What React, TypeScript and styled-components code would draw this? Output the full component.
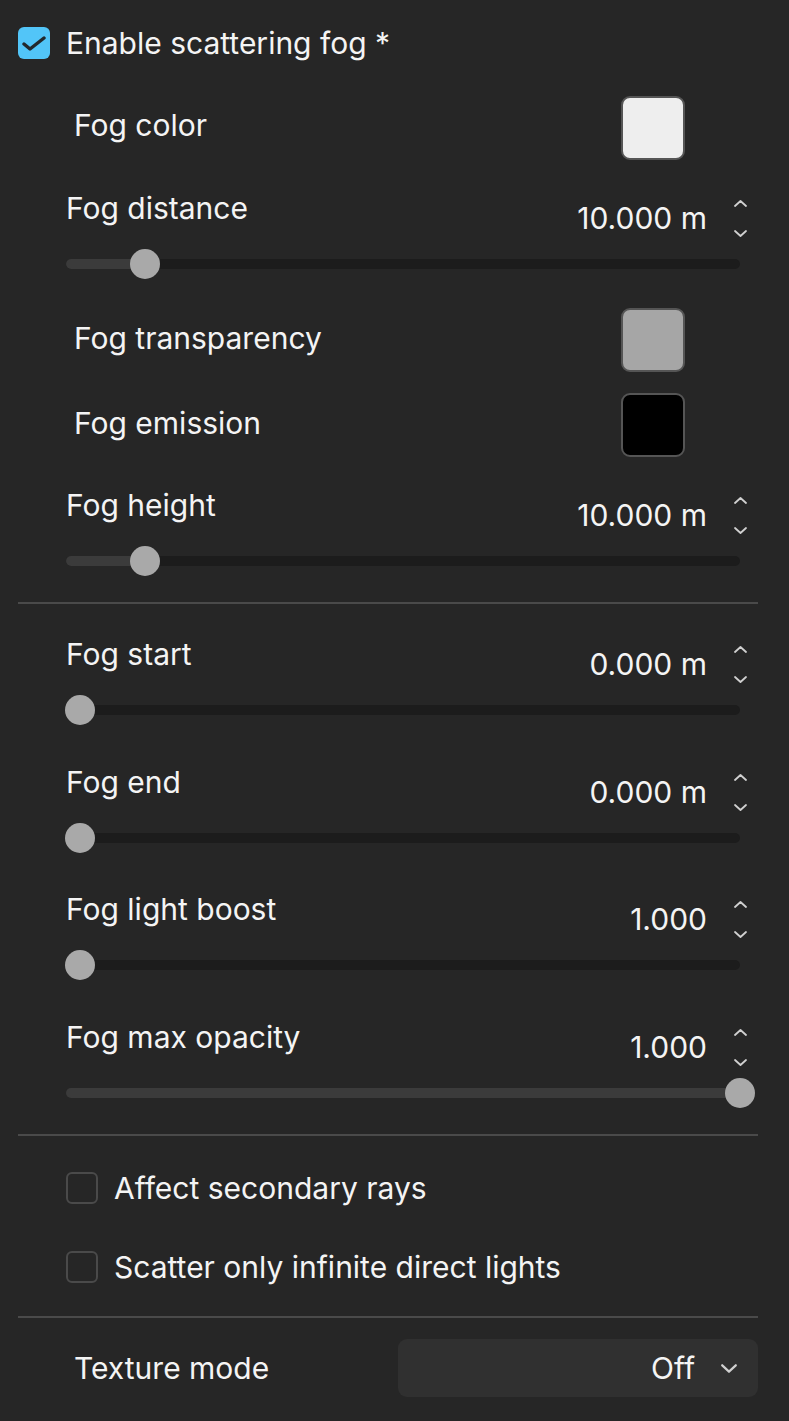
import React from "react";
import styled, { createGlobalStyle } from "styled-components";

const Global = createGlobalStyle`
  html, body { margin: 0; padding: 0; background: #262626; }
  body { font-family: Inter, "Noto Sans", "Liberation Sans", sans-serif; color: #f2f2f2; }
  * { box-sizing: border-box; }
`;

const Panel = styled.div`
  width: 789px;
  min-height: 1421px;
  background: #262626;
  padding: 27px 31px 0 18px;
  display: flex;
  flex-direction: column;
`;

const Text = styled.span<{ $lift?: number }>`
  font-size: 30px;
  line-height: 34px;
  color: #f4f4f4;
  white-space: nowrap;
  margin-bottom: ${(p) => (p.$lift ?? 0) * 2}px;
`;

const CheckRow = styled.label<{ $mt: number; $indent: number }>`
  display: flex;
  align-items: center;
  gap: 16px;
  height: 32px;
  margin-top: ${(p) => p.$mt}px;
  padding-left: ${(p) => p.$indent}px;
`;

const Box = styled.span<{ $checked?: boolean }>`
  width: 32px;
  height: 32px;
  border-radius: 6px;
  flex: none;
  display: flex;
  align-items: center;
  justify-content: center;
  background: ${(p) => (p.$checked ? "#52c5f8" : "transparent")};
  border: ${(p) => (p.$checked ? "none" : "2px solid #4a4a4a")};
`;

const ColorRow = styled.div<{ $mt: number }>`
  display: flex;
  align-items: center;
  justify-content: space-between;
  height: 63px;
  margin-top: ${(p) => p.$mt}px;
  padding-left: 56px;
  padding-right: 73px;
`;

const Swatch = styled.div<{ $color: string }>`
  width: 64px;
  height: 64px;
  border-radius: 9px;
  border: 2px solid #555555;
  background: ${(p) => p.$color};
`;

const SliderBlock = styled.div<{ $mt: number }>`
  display: flex;
  flex-direction: column;
  margin-top: ${(p) => p.$mt}px;
  padding-left: 48px;
`;

const TopLine = styled.div`
  display: flex;
  align-items: flex-start;
  justify-content: space-between;
  height: 58px;
`;

const ValueGroup = styled.div`
  display: flex;
  align-items: center;
  gap: 26px;
  margin-top: 10px;
  height: 34px;
  padding-right: 11px;
`;

const Spinner = styled.div`
  display: flex;
  flex-direction: column;
  align-items: center;
  justify-content: space-between;
  height: 37px;
  width: 14px;
`;

const Track = styled.div`
  position: relative;
  height: 30px;
  width: 674px;
  display: flex;
  align-items: center;
`;

const Rail = styled.div`
  width: 100%;
  height: 10px;
  border-radius: 5px;
  background: #1c1c1c;
  overflow: hidden;
`;

const Fill = styled.div`
  height: 100%;
  background: #3b3b3b;
`;

const Thumb = styled.div`
  position: absolute;
  top: 0;
  width: 30px;
  height: 30px;
  border-radius: 50%;
  background: #a9a9a9;
  transform: translateX(-15px);
`;

const Divider = styled.div<{ $mt: number }>`
  height: 2px;
  background: #4a4a4a;
  margin-top: ${(p) => p.$mt}px;
`;

const SelectRow = styled.div<{ $mt: number }>`
  display: flex;
  align-items: center;
  justify-content: space-between;
  margin-top: ${(p) => p.$mt}px;
  padding-left: 56px;
`;

const Select = styled.div`
  width: 360px;
  height: 58px;
  border-radius: 9px;
  background: #303030;
  display: flex;
  align-items: center;
  justify-content: flex-end;
  gap: 26px;
  padding-right: 21px;
`;

const Chevron = ({ up, w = 13, h = 7 }: { up?: boolean; w?: number; h?: number }) => (
  <svg width={w} height={h} viewBox="0 0 13 7" fill="none" preserveAspectRatio="none">
    <path
      d={up ? "M1 6 L6.5 1 L12 6" : "M1 1 L6.5 6 L12 1"}
      stroke="#d0d0d0"
      strokeWidth="1.8"
      strokeLinecap="round"
      strokeLinejoin="round"
    />
  </svg>
);

const Slider = ({
  mt,
  label,
  value,
  frac,
}: {
  mt: number;
  label: string;
  value: string;
  frac: number;
}) => {
  const min = 14;
  const max = 674;
  const x = min + (max - min) * frac;
  return (
    <SliderBlock $mt={mt}>
      <TopLine>
        <Text>{label}</Text>
        <ValueGroup>
          <Text>{value}</Text>
          <Spinner>
            <Chevron up />
            <Chevron />
          </Spinner>
        </ValueGroup>
      </TopLine>
      <Track>
        <Rail>
          <Fill style={{ width: frac <= 0 ? 0 : `${x}px` }} />
        </Rail>
        <Thumb style={{ left: `${x}px` }} />
      </Track>
    </SliderBlock>
  );
};

export default function App() {
  return (
    <>
      <Global />
      <Panel>
        <CheckRow $mt={0} $indent={0}>
          <Box $checked>
            <svg width="26" height="16" viewBox="0 0 26 16" fill="none">
              <path
                d="M3 9 L9 14 L23 3"
                stroke="#22282c"
                strokeWidth="3.4"
                strokeLinecap="round"
                strokeLinejoin="round"
              />
            </svg>
          </Box>
          <Text>Enable scattering fog *</Text>
        </CheckRow>

        <ColorRow $mt={37}>
          <Text $lift={3}>Fog color</Text>
          <Swatch $color="#eeeeee" />
        </ColorRow>

        <Slider mt={32} label="Fog distance" value="10.000 m" frac={0.0985} />

        <ColorRow $mt={29}>
          <Text $lift={1.5}>Fog transparency</Text>
          <Swatch $color="#a6a6a6" />
        </ColorRow>

        <ColorRow $mt={22}>
          <Text $lift={2}>Fog emission</Text>
          <Swatch $color="#000000" />
        </ColorRow>

        <Slider mt={32} label="Fog height" value="10.000 m" frac={0.0985} />

        <Divider $mt={26} />

        <Slider mt={33} label="Fog start" value="0.000 m" frac={0} />
        <Slider mt={40} label="Fog end" value="0.000 m" frac={0} />
        <Slider mt={39} label="Fog light boost" value="1.000" frac={0} />
        <Slider mt={40} label="Fog max opacity" value="1.000" frac={1} />

        <Divider $mt={26} />

        <CheckRow $mt={36} $indent={48}>
          <Box />
          <Text>Affect secondary rays</Text>
        </CheckRow>
        <CheckRow $mt={47} $indent={48}>
          <Box />
          <Text>Scatter only infinite direct lights</Text>
        </CheckRow>

        <Divider $mt={33} />

        <SelectRow $mt={21}>
          <Text>Texture mode</Text>
          <Select>
            <Text>Off</Text>
            <Chevron w={16} h={9} />
          </Select>
        </SelectRow>
      </Panel>
    </>
  );
}
